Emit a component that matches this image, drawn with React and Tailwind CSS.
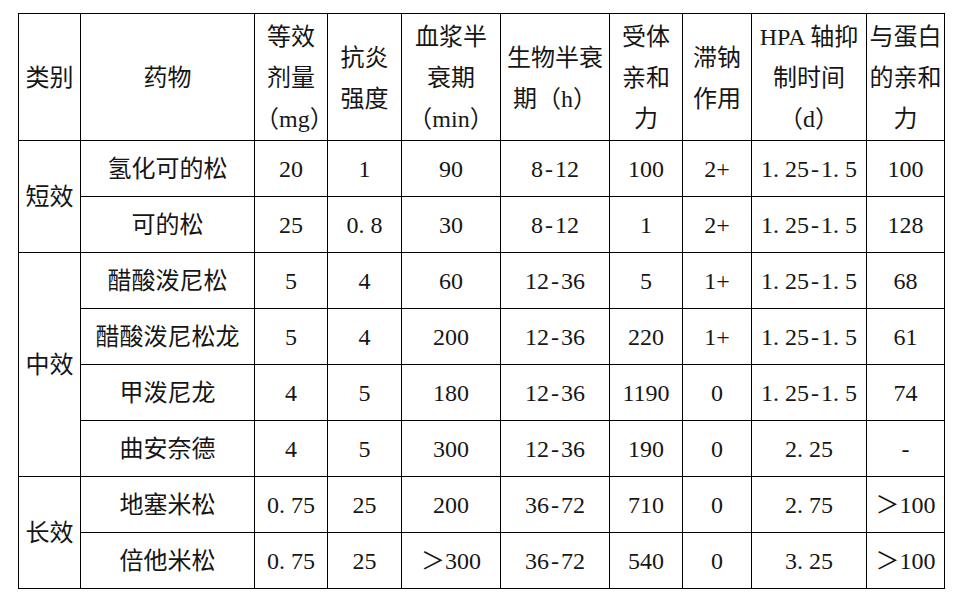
import React from 'react';

const widths = [62, 174, 73, 74, 99, 109, 73, 69, 115, 78];

const header = [
  ['类别'],
  ['药物'],
  ['等效', '剂量', '（mg）'],
  ['抗炎', '强度'],
  ['血浆半', '衰期', '（min）'],
  ['生物半衰', '期（h）'],
  ['受体', '亲和', '力'],
  ['滞钠', '作用'],
  ['HPA 轴抑', '制时间', '（d）'],
  ['与蛋白', '的亲和', '力'],
];

const groups = [
  {
    name: '短效',
    rows: [
      ['氢化可的松', '20', '1', '90', '8-12', '100', '2+', '1.25-1.5', '100'],
      ['可的松', '25', '0.8', '30', '8-12', '1', '2+', '1.25-1.5', '128'],
    ],
  },
  {
    name: '中效',
    rows: [
      ['醋酸泼尼松', '5', '4', '60', '12-36', '5', '1+', '1.25-1.5', '68'],
      ['醋酸泼尼松龙', '5', '4', '200', '12-36', '220', '1+', '1.25-1.5', '61'],
      ['甲泼尼龙', '4', '5', '180', '12-36', '1190', '0', '1.25-1.5', '74'],
      ['曲安奈德', '4', '5', '300', '12-36', '190', '0', '2.25', '-'],
    ],
  },
  {
    name: '长效',
    rows: [
      ['地塞米松', '0.75', '25', '200', '36-72', '710', '0', '2.75', '＞100'],
      ['倍他米松', '0.75', '25', '＞300', '36-72', '540', '0', '3.25', '＞100'],
    ],
  },
];

// SimSun-style half-width dot and dash: pad them so numbers read "1. 25−1. 5"
function Num({ value }) {
  return (
    <>
      {value.split(/([.-])/).map((p, i) => {
        if (p === '.') return <span key={i} className="pr-[6px]">.</span>;
        if (p === '-') return <span key={i} className="px-[2px]">-</span>;
        return <React.Fragment key={i}>{p}</React.Fragment>;
      })}
    </>
  );
}

const cell = 'border border-black text-center align-middle p-0 whitespace-nowrap';

export default function App() {
  return (
    <div className="w-[974px] h-[613px] bg-white pt-[13px] pl-[18px] text-[24px] text-[#161616] font-['Liberation_Serif','Noto_Sans_CJK_SC',serif]">
      <table className="table-fixed border-collapse w-[926px]">
        <colgroup>
          {widths.map((w, i) => (
            <col key={i} style={{ width: w }} />
          ))}
        </colgroup>
        <thead>
          <tr className="h-[127px]">
            {header.map((lines, i) => (
              <th key={i} className={`${cell} font-normal leading-[41px] pt-[3px]`}>
                {lines.map((l, j) => (
                  <div key={j}>{l}</div>
                ))}
              </th>
            ))}
          </tr>
        </thead>
        <tbody>
          {groups.map(g =>
            g.rows.map((r, ri) => (
              <tr key={g.name + ri} className="h-[56px]">
                {ri === 0 && (
                  <td rowSpan={g.rows.length} className={cell}>
                    {g.name}
                  </td>
                )}
                {r.map((v, ci) => (
                  <td key={ci} className={cell}>
                    {ci === 0 ? v : <Num value={v} />}
                  </td>
                ))}
              </tr>
            ))
          )}
        </tbody>
      </table>
    </div>
  );
}
